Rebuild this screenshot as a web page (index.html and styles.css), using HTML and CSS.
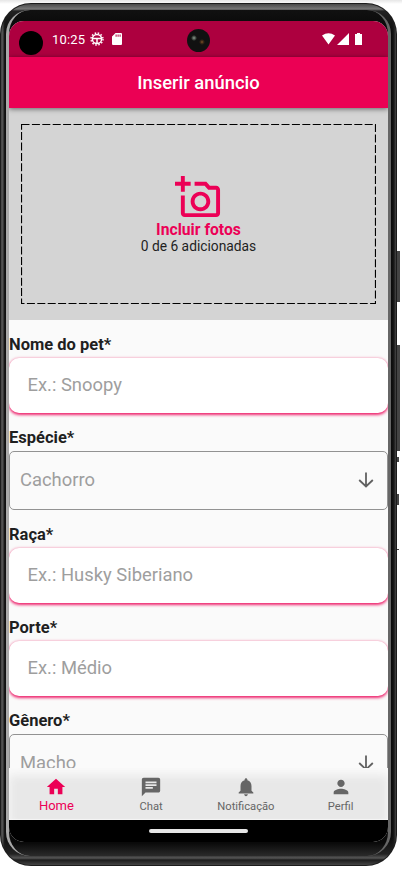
FILE: index.html
```html
<!DOCTYPE html>
<html lang="pt-BR">
<head>
<meta charset="utf-8">
<title>Inserir anúncio</title>
<link rel="stylesheet" href="styles.css">
</head>
<body>
<div class="phone">
  <i class="side power"></i><i class="side volume"></i><i class="side notch-a"></i><i class="side notch-b"></i><i class="side notch-c"></i>
  <div class="bezel"><div class="rim">
  <div class="screen">
    <header class="status">
      <span class="corner-dot"></span>
      <span class="clock">10:25</span>
      <svg class="gear" viewBox="0 0 14 14"><circle cx="7" cy="7" r="4.600" fill="none" stroke="#fff" stroke-width="1.500"/><circle cx="7" cy="7" r="6" fill="none" stroke="#fff" stroke-width="1.400" stroke-dasharray="1.570 1.570"/><path d="M3 6.500h8M7 6.500v5" stroke="#fff" stroke-width="1.500"/></svg>
      <svg class="sd" viewBox="0 0 10 12"><path fill="#fff" fill-rule="evenodd" d="M3.500 0H9q1 0 1 1v10q0 1-1 1H1q-1 0-1-1V3.500zM3.600 1.600v2.200h1V1.600zm2 0v2.200h1V1.600zm2 0v2.200h1V1.600z"/></svg>
      <span class="camera"></span>
      <svg class="signals" viewBox="0 0 41 12"><path fill="#fff" d="M0 2.600Q6.500-2.300 13 2.600L6.500 11.500zM27 0v12H15zM33 1h2V0h3v1h2v11h-7z"/></svg>
    </header>
    <div class="appbar">Inserir anúncio</div>
    <main class="content">
      <section class="photos">
        <svg class="dashes" viewBox="0 0 355 180"><path d="M.5.500H354.500V179.500H.500z" fill="none" stroke="#000" stroke-width="1.200" stroke-dasharray="8 2.400"/></svg>
        <svg class="add-photo" viewBox="0 0 24 24"><path fill="#ec0056" d="M21 6h-3.170L16 4h-6v2h5.120l1.830 2H21v12H5v-9H3v9c0 1.100.9 2 2 2h16c1.100 0 2-.9 2-2V8c0-1.100-.9-2-2-2zM8 14c0 2.760 2.240 5 5 5s5-2.240 5-5-2.240-5-5-5-5 2.240-5 5zm5-3c1.650 0 3 1.350 3 3s-1.350 3-3 3-3-1.350-3-3 1.350-3 3-3zM5 6h3V4H5V1H3v3H0v2h3v3h2z"/></svg>
        <strong>Incluir fotos</strong>
        <span>0 de 6 adicionadas</span>
      </section>
      <label class="label">Nome do pet*</label>
      <div class="input">Ex.: Snoopy</div>
      <label class="label">Espécie*</label>
      <div class="select">Cachorro<svg viewBox="0 0 16 16"><path d="M8 .5v14M1.200 8L8 14.500 14.800 8" fill="none" stroke="#616161" stroke-width="1.800"/></svg></div>
      <label class="label">Raça*</label>
      <div class="input">Ex.: Husky Siberiano</div>
      <label class="label">Porte*</label>
      <div class="input">Ex.: Médio</div>
      <label class="label">Gênero*</label>
      <div class="select">Macho<svg viewBox="0 0 16 16"><path d="M8 .5v14M1.200 8L8 14.500 14.800 8" fill="none" stroke="#616161" stroke-width="1.800"/></svg></div>
    </main>
    <nav class="tabs">
      <div class="tab active"><svg viewBox="0 0 24 24"><path d="M10 20v-6h4v6h5v-8h3L12 3 2 12h3v8z"/></svg>Home</div>
      <div class="tab"><svg viewBox="0 0 24 24"><path d="M20 2H4c-1.100 0-1.990.9-1.990 2L2 22l4-4h14c1.100 0 2-.9 2-2V4c0-1.100-.9-2-2-2zM6 9h12v2H6V9zm8 5H6v-2h8v2zm4-6H6V6h12v2z"/></svg>Chat</div>
      <div class="tab"><svg viewBox="0 0 24 24"><path d="M12 22c1.100 0 2-.9 2-2h-4c0 1.100.9 2 2 2zm6-6v-5c0-3.070-1.640-5.640-4.500-6.320V4c0-.83-.67-1.500-1.500-1.500s-1.500.67-1.500 1.500v.68C7.630 5.360 6 7.920 6 11v5l-2 2v1h16v-1l-2-2z"/></svg>Notificação</div>
      <div class="tab"><svg viewBox="0 0 24 24"><path d="M12 12c2.210 0 4-1.790 4-4s-1.790-4-4-4-4 1.790-4 4 1.790 4 4 4zm0 2c-2.670 0-8 1.340-8 4v2h16v-2c0-2.660-5.330-4-8-4z"/></svg>Perfil</div>
    </nav>
    <footer class="gesture"><span></span></footer>
  </div>
  </div></div>
</div>
</body>
</html>
```
FILE: styles.css
```css
* { box-sizing: border-box; }
body { margin: 0; width: 402px; height: 878px; overflow: hidden; background: linear-gradient(#e6e6e6, #fff 4px); font-family: Roboto, sans-serif; color: #1f1f1f; }
.phone { position: relative; width: 397px; height: 863px; margin-top: 3px; padding: 1px; border-radius: 31px; background: #1c1c1c; }
.bezel { height: 861px; padding: 6px 5px 9px; border-radius: 30px; background: linear-gradient(#4a4a4a, #777 5px, #222 7px, transparent 28px, transparent 832px, #222 850px, #555 854px, #1c1c1c 856px, #444), linear-gradient(90deg, #444, #555 2px, #1a1a1a 3px, #0c0c0c 5px, #0c0c0c 391px, #1a1a1a 393px, #484848); }
.rim { height: 846px; padding-top: 11px; border-left: 3px solid #a9a9a9; border-right: 3px solid #666; border-radius: 24px; background: linear-gradient(#111, #0a0a0a 15px, #0a0a0a 833px, #2a2a2a); }
.screen { display: flex; flex-direction: column; width: 379px; height: 821px; border-radius: 15px; overflow: hidden; background: #fafafa; }
.status { position: relative; flex: 0 0 36px; display: flex; align-items: center; background: #ad003f; color: #fff; }
.corner-dot { width: 24px; height: 24px; margin: 7px 10px 0 10px; border-radius: 50%; background: #000; }
.clock { margin-left: -1px; font-size: 13px; letter-spacing: .2px; }
.gear { width: 14px; height: 14px; margin-left: 5px; }
.sd { width: 10px; height: 12px; margin-left: 8px; }
.camera { position: absolute; left: 178px; top: 8px; width: 23px; height: 23px; border-radius: 50%; background: radial-gradient(circle at 7px 9px, #8c9a90 0, #384039 2px, transparent 3px), radial-gradient(circle at 15px 13px, #96652c 0, #49301a 1px, transparent 3px), #111; }
.signals { width: 41px; height: 12px; margin-left: auto; margin-right: 25px; }
.appbar { position: relative; z-index: 1; flex: 0 0 51px; line-height: 51px; background: #eb0054; color: #fff; text-align: center; font-size: 18.400px; font-weight: 500; box-shadow: 0 1px 5px #0008; }
.content { flex: 1; min-height: 0; overflow: hidden; }
.photos { position: relative; height: 212px; padding-top: 66px; display: flex; flex-direction: column; align-items: center; background: #d4d4d4; font-size: 13.800px; line-height: 17px; }
.dashes { position: absolute; left: 12px; top: 16px; width: 355px; height: 180px; }
.add-photo { width: 47px; height: 47px; margin-left: -1px; margin-bottom: 1px; }
.photos strong { font-size: 15.700px; color: #ec0056; line-height: 16px; }
.label { display: block; height: 38px; padding-top: 14px; font-size: 16.500px; font-weight: 700; line-height: 21px; }
.input { height: 55px; padding-left: 18.500px; border-radius: 10px; background: #fff; box-shadow: 0 2px 3px #ec0056cc, 0 0 3px #ec005666; color: #9e9e9e; font-size: 18.400px; line-height: 54px; }
.select { height: 59px; display: flex; align-items: center; justify-content: space-between; padding: 0 13px 2px 10px; border: 1px solid #929292; border-radius: 5px; color: #9e9e9e; font-size: 18.400px; }
.select svg { width: 16px; height: 16px; margin-top: 1px; }
.tabs { position: relative; z-index: 1; flex: 0 0 52px; display: flex; background: #e8e8e8; box-shadow: inset 0 7px 10px #fafafa, inset 0 -1px 1px #f5f5f5; }
.tab { flex: 1; display: flex; flex-direction: column; align-items: center; padding-top: 8px; font-size: 11.200px; line-height: 17px; color: #666; }
.tab svg { width: 22px; height: 22px; fill: currentColor; }
.tab.active { color: #ec0056; font-size: 13px; line-height: 15px; }
.gesture { flex: 0 0 22px; padding-top: 9px; background: #000; }
.gesture span { display: block; width: 99px; height: 4px; margin: 0 auto; border-radius: 2px; background: #e6e6e6; }
.side { position: absolute; left: 397px; width: 3px; background: #444; }
.power { top: 248px; height: 51px; }
.volume { top: 342px; height: 106px; }
.notch-a { top: 454px; height: 5px; width: 2px; }
.notch-b { top: 491px; height: 11px; width: 2px; }
.notch-c { top: 546px; height: 1px; width: 2px; }
```
